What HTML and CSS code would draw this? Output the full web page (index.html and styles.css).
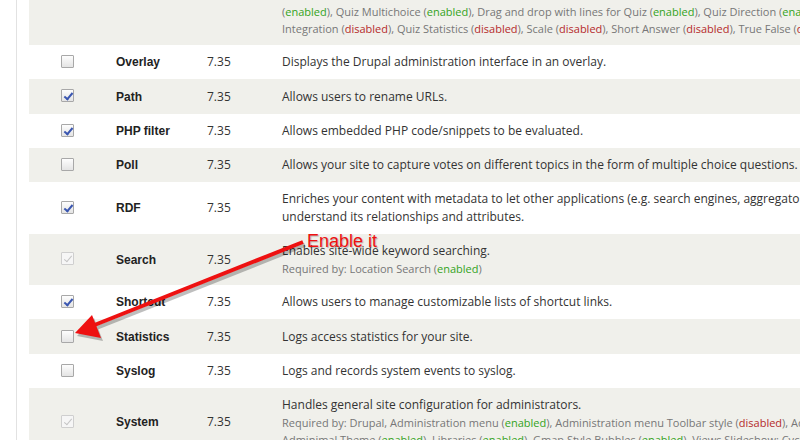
FILE: index.html
```html
<!DOCTYPE html>
<html lang="en">
<head>
    <meta charset="UTF-8">
    <title>Modules</title>
    <link rel="stylesheet" href="styles.css">
</head>
<body>
    <div class="page">
        <table class="modules">
            <colgroup>
                <col class="c-check">
                <col class="c-name">
                <col class="c-ver">
                <col class="c-desc">
            </colgroup>
            <tr class="odd first">
                <td></td>
                <td></td>
                <td></td>
                <td>
                    <div class="req">(<span class="on">enabled</span>), Quiz Multichoice (<span class="on">enabled</span>), Drag and drop with lines for Quiz (<span class="on">enabled</span>), Quiz Direction (<span class="on">enabled</span>), Quiz Matching (<span class="on">enabled</span>)</div>
                    <div class="req">Integration (<span class="off">disabled</span>), Quiz Statistics (<span class="off">disabled</span>), Scale (<span class="off">disabled</span>), Short Answer (<span class="off">disabled</span>), True False (<span class="off">disabled</span>)</div>
                </td>
            </tr>
            <tr class="even">
                <td><span class="cb"></span></td>
                <td class="name">Overlay</td>
                <td>7.35</td>
                <td>Displays the Drupal administration interface in an overlay.</td>
            </tr>
            <tr class="odd">
                <td><span class="cb checked"></span></td>
                <td class="name">Path</td>
                <td>7.35</td>
                <td>Allows users to rename URLs.</td>
            </tr>
            <tr class="even">
                <td><span class="cb checked"></span></td>
                <td class="name">PHP filter</td>
                <td>7.35</td>
                <td>Allows embedded PHP code/snippets to be evaluated.</td>
            </tr>
            <tr class="odd">
                <td><span class="cb"></span></td>
                <td class="name">Poll</td>
                <td>7.35</td>
                <td>Allows your site to capture votes on different topics in the form of multiple choice questions.</td>
            </tr>
            <tr class="even multi">
                <td><span class="cb checked"></span></td>
                <td class="name">RDF</td>
                <td>7.35</td>
                <td>
                    <div>Enriches your content with metadata to let other applications (e.g. search engines, aggregators) to better</div>
                    <div>understand its relationships and attributes.</div>
                </td>
            </tr>
            <tr class="odd multi">
                <td><span class="cb checked disabled"></span></td>
                <td class="name">Search</td>
                <td>7.35</td>
                <td>
                    <div>Enables site-wide keyword searching.</div>
                    <div class="req">Required by: Location Search (<span class="on">enabled</span>)</div>
                </td>
            </tr>
            <tr class="even">
                <td><span class="cb checked"></span></td>
                <td class="name">Shortcut</td>
                <td>7.35</td>
                <td>Allows users to manage customizable lists of shortcut links.</td>
            </tr>
            <tr class="odd">
                <td><span class="cb"></span></td>
                <td class="name">Statistics</td>
                <td>7.35</td>
                <td>Logs access statistics for your site.</td>
            </tr>
            <tr class="even">
                <td><span class="cb"></span></td>
                <td class="name">Syslog</td>
                <td>7.35</td>
                <td>Logs and records system events to syslog.</td>
            </tr>
            <tr class="odd multi">
                <td><span class="cb checked disabled"></span></td>
                <td class="name">System</td>
                <td>7.35</td>
                <td>
                    <div>Handles general site configuration for administrators.</div>
                    <div class="req">Required by: Drupal, Administration menu (<span class="on">enabled</span>), Administration menu Toolbar style (<span class="off">disabled</span>), Administration menu</div>
                    <div class="req">Adminimal Theme (<span class="on">enabled</span>), Libraries (<span class="on">enabled</span>), Gmap Style Bubbles (<span class="on">enabled</span>), Views Slideshow: Cycle (<span class="on">enabled</span>)</div>
                </td>
            </tr>
        </table>

        <div class="callout">
            <svg class="arrow" width="800" height="440" viewBox="0 0 800 440">
                <g transform="translate(2,3)" opacity="0.25">
                    <line x1="303" y1="242" x2="92" y2="326" stroke="#000" stroke-width="4"/>
                    <polygon points="75,333 92,315 101,338" fill="#000"/>
                </g>
                <line x1="303" y1="242" x2="92" y2="326" stroke="#ee1111" stroke-width="4"/>
                <polygon points="75,333 92,315 101,338" fill="#ee1111"/>
            </svg>
            <span class="label">Enable it</span>
        </div>
    </div>
</body>
</html>
```

FILE: styles.css
```css
body {
    margin: 0;
    width: 800px;
    height: 440px;
    overflow: hidden;
    background: #fff;
    font-family: "Open Sans", sans-serif;
    font-size: 12px;
    color: #333;
}
.page {
    position: relative;
    margin-left: 16px;
    padding-left: 12px;
    border-left: 1px solid #e2e2e2;
    height: 440px;
}
.modules {
    border-collapse: collapse;
    width: 1100px;
    table-layout: fixed;
}
.c-check { width: 78px; }
.c-name { width: 91px; }
.c-ver { width: 75px; }
.modules td {
    padding: 8.3px 9px 8px;
    line-height: 18px;
    white-space: nowrap;
    vertical-align: middle;
}
.modules tr.multi td {
    padding-top: 8px;
}
.modules td:first-child {
    padding-left: 32px;
    padding-right: 0;
}
.modules tr.first td {
    padding-top: 3px;
}
.odd { background: #f0f0eb; }
.even { background: #fff; }
.name {
    font-family: "Liberation Sans", Arial, sans-serif;
    font-weight: bold;
    font-size: 12px;
    color: #222;
}
.req {
    font-size: 11px;
    color: #777;
    line-height: 17px;
}
.on { color: #33a31b; }
.off { color: #b52a2a; }

.cb {
    display: inline-block;
    position: relative;
    width: 11px;
    height: 11px;
    border: 1px solid #a8a8a8;
    border-radius: 1px;
    background: linear-gradient(#fdfdfd, #e4e4e4);
    vertical-align: middle;
    margin-top: -3px;
}
.cb.checked::after {
    content: "";
    position: absolute;
    left: 4px;
    top: 1px;
    width: 3px;
    height: 7px;
    border-right: 2px solid #3a56b0;
    border-bottom: 2px solid #3a56b0;
    transform: rotate(40deg);
}
.cb.disabled {
    border-color: #cfcfcf;
    background: #f6f6f6;
}
.cb.disabled::after {
    border-color: #c4c4c4;
    border-width: 0 1px 1px 0;
}

.callout {
    position: absolute;
    left: -17px;
    top: 0;
    width: 800px;
    height: 440px;
    pointer-events: none;
}
.arrow {
    position: absolute;
    left: 0;
    top: 0;
}
.label {
    position: absolute;
    left: 307px;
    top: 231px;
    font-family: "Liberation Sans", Arial, sans-serif;
    font-size: 18px;
    color: #ee1111;
    text-shadow: 1px 1px 1px rgba(0, 0, 0, 0.25);
}
```
